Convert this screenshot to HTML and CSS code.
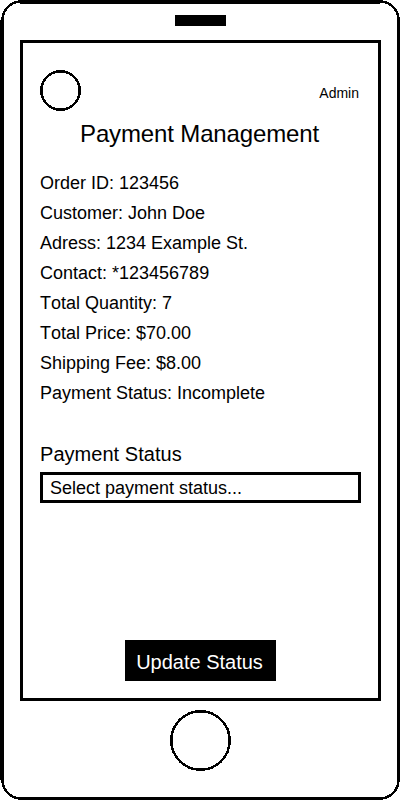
FILE: index.html
```html
<!DOCTYPE html>
<html lang="en">
<head>
<meta charset="utf-8">
<title>Payment Management</title>
<link rel="stylesheet" href="styles.css">
</head>
<body>
<div class="phone">
  <svg class="frame" viewBox="0 0 400 800" aria-hidden="true">
    <path class="edge" d="M20 0H380V4H20ZM0 20H4V780H0ZM397 20H400V780H397ZM20 797H380V800H20Z"/>
    <path class="corner" d="M2.5 20A18.5 18.5 0 0 1 20 1.5M380 1.5A18.5 18.5 0 0 1 398.5 20M2.5 780A18.5 18.5 0 0 0 20 798.5M380 798.5A18.5 18.5 0 0 0 398.5 780"/>
  </svg>
  <div class="speaker"></div>
  <main class="screen">
    <header class="top"><svg class="avatar" viewBox="0 0 41 41" aria-hidden="true"><circle cx="20.5" cy="20.5" r="19.2"/></svg><span class="role">Admin</span></header>
    <h1 class="title">Payment Management</h1>
    <ul class="details">
      <li>Order ID: 123456</li>
      <li>Customer: John Doe</li>
      <li>Adress: 1234 Example St.</li>
      <li>Contact: *123456789</li>
      <li>Total Quantity: 7</li>
      <li>Total Price: $70.00</li>
      <li>Shipping Fee: $8.00</li>
      <li>Payment Status: Incomplete</li>
    </ul>
    <h2 class="label">Payment Status</h2>
    <div class="select">Select payment status...</div>
    <button class="update">Update Status</button>
  </main>
  <svg class="home" viewBox="0 0 61 61" aria-hidden="true"><circle cx="30.5" cy="30.5" r="29.2"/></svg>
</div>
</body>
</html>
```
FILE: styles.css
```css
* { box-sizing: border-box; }
body { margin: 0; background: #fff; color: #000; font-family: "Liberation Sans", Arial, sans-serif; font-kerning: none; }
.phone { position: relative; width: 400px; height: 800px; display: flex; flex-direction: column; align-items: center; padding: 15px 0 0 1px; }
.frame { position: absolute; top: 0; left: 0; width: 400px; height: 800px; shape-rendering: crispEdges; }
.edge { fill: #000; }
.corner { fill: none; stroke: #000; stroke-width: 2.5px; }
.speaker { width: 51px; height: 11px; background: #000; flex: none; }
.screen { width: 361px; height: 661px; flex: none; margin-top: 14px; border: 3px solid #000; padding: 27px 17px 0; display: flex; flex-direction: column; }
.top { display: flex; justify-content: space-between; height: 41px; }
.avatar, .home { fill: none; stroke: #000; stroke-width: 2.5px; shape-rendering: crispEdges; }
.avatar { width: 41px; height: 41px; }
.role { font-size: 14px; line-height: 16px; margin: 15px 2px 0 0; }
.title { margin: 9px 2px 0 0; font-size: 24px; line-height: 28px; font-weight: 400; text-align: center; letter-spacing: -0.14px; }
.details { list-style: none; margin: 20px 0 0; padding: 0; font-size: 18px; line-height: 30px; }
.label { margin: 34px 0 0; font-size: 20px; line-height: 24px; font-weight: 400; letter-spacing: 0.04px; }
.select { margin-top: 6px; height: 31px; border: 3px solid #000; padding-left: 7px; font-size: 18px; line-height: 26px; }
.update { margin: 137px auto 0; width: 151px; height: 41px; border: 0; padding: 3px 2px 0 0; background: #000; color: #fff; font: 20px "Liberation Sans", Arial, sans-serif; }
.home { width: 61px; height: 61px; flex: none; margin-top: 9px; }
```
